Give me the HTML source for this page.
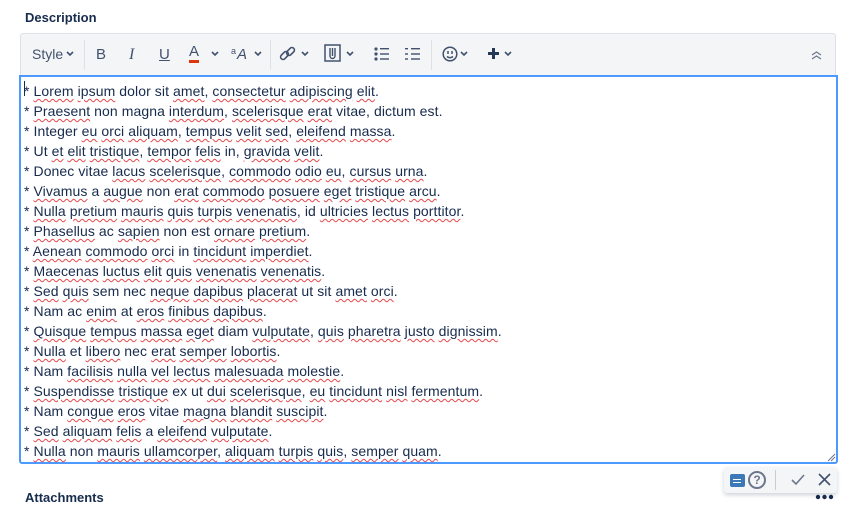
<!DOCTYPE html>
<html><head><style>
body{margin:0;width:853px;height:511px;background:#fff;font-family:"Liberation Sans",sans-serif;color:#172b4d;position:relative;overflow:hidden}
.h{position:absolute;left:25px;font-weight:bold;font-size:13px}
.tb{position:absolute;left:20px;top:33px;width:816px;height:42px;background:#f4f5f7;border:1px solid #dfe1e6;border-bottom:none;border-radius:3px 3px 0 0;box-sizing:border-box}
.tb span{position:absolute;top:12px;font-size:15px;color:#42526e}
.tb svg{position:absolute}
.sep{position:absolute;top:6px;width:1px;height:30px;background:#dfe1e6}
.ed{position:absolute;left:19px;top:75px;width:819px;height:389px;border:2px solid #4c9aff;box-sizing:border-box;border-radius:0 0 3px 3px}
.txt{position:absolute;left:24px;top:81px;font-size:14px;line-height:20px;white-space:pre;letter-spacing:0.08px}
.s{text-decoration:underline wavy #e5484d;text-decoration-thickness:1px;text-underline-offset:2px}
</style></head><body>
<div class="h" style="top:10px">Description</div>
<div class="tb">
<span style="left:11px;font-size:14px;top:12px">Style</span>
<svg style="left:45px;top:17px" width="8" height="6"><path d="M1 1L4 4L7 1" stroke="#42526e" stroke-width="1.6" fill="none"/></svg>
<div class="sep" style="left:63px"></div>
<span style="left:75px;">B</span>
<span style="left:108px;font-style:italic;font-family:'Liberation Serif';font-size:16px">I</span>
<span style="left:138px;text-decoration:underline">U</span>
<span style="left:168px;top:10px;border-bottom:3px solid #de350b;line-height:16px">A</span>
<svg style="left:190px;top:17px" width="8" height="6"><path d="M1 1L4 4L7 1" stroke="#42526e" stroke-width="1.6" fill="none"/></svg>
<span style="left:210px;font-size:9px;top:12px">a</span><span style="left:216px;font-style:italic;font-size:15px">A</span>
<svg style="left:233px;top:17px" width="8" height="6"><path d="M1 1L4 4L7 1" stroke="#42526e" stroke-width="1.6" fill="none"/></svg>
<div class="sep" style="left:249px"></div>
<svg style="left:258px;top:11px" width="18" height="18"><g fill="none" stroke="#42526e" stroke-width="1.6"><rect x="1" y="8" width="9" height="5" rx="2.5" transform="rotate(-45 5.5 10.5)"/><rect x="7" y="4" width="9" height="5" rx="2.5" transform="rotate(-45 11.5 6.5)"/></g></svg>
<svg style="left:280px;top:17px" width="8" height="6"><path d="M1 1L4 4L7 1" stroke="#42526e" stroke-width="1.6" fill="none"/></svg>
<svg style="left:303px;top:10px" width="17" height="18"><rect x="1" y="1" width="15" height="16" fill="none" stroke="#42526e" stroke-width="1.5"/><path d="M6 4V12a2.5 2.5 0 0 0 5 0V4M8.5 4v8" fill="none" stroke="#42526e" stroke-width="1.4"/></svg>
<svg style="left:325px;top:17px" width="8" height="6"><path d="M1 1L4 4L7 1" stroke="#42526e" stroke-width="1.6" fill="none"/></svg>
<svg style="left:353px;top:13px" width="15" height="14"><g fill="#42526e"><circle cx="2" cy="2" r="1.6"/><circle cx="2" cy="7" r="1.6"/><circle cx="2" cy="12" r="1.6"/><rect x="6" y="1" width="9" height="1.4"/><rect x="6" y="6.3" width="9" height="1.4"/><rect x="6" y="11.3" width="9" height="1.4"/></g></svg>
<svg style="left:384px;top:13px" width="15" height="14"><g fill="#42526e"><rect x="0" y="1" width="3" height="1.4"/><rect x="0" y="6.3" width="3" height="1.4"/><rect x="0" y="11.3" width="3" height="1.4"/><rect x="6" y="1" width="9" height="1.4"/><rect x="6" y="6.3" width="9" height="1.4"/><rect x="6" y="11.3" width="9" height="1.4"/></g></svg>
<div class="sep" style="left:410px"></div>
<svg style="left:421px;top:12px" width="16" height="16"><circle cx="8" cy="8" r="6.8" fill="none" stroke="#42526e" stroke-width="1.5"/><path d="M6 5v3M10 5v3M5 10.5q3 2.5 6 0" stroke="#42526e" stroke-width="1.5" fill="none"/></svg>
<svg style="left:439px;top:17px" width="8" height="6"><path d="M1 1L4 4L7 1" stroke="#42526e" stroke-width="1.6" fill="none"/></svg>
<svg style="left:466px;top:13px" width="13" height="13"><path d="M6.5 1v11M1 6.5h11" stroke="#253858" stroke-width="3"/></svg>
<svg style="left:483px;top:17px" width="8" height="6"><path d="M1 1L4 4L7 1" stroke="#42526e" stroke-width="1.6" fill="none"/></svg>
<svg style="left:790px;top:17px" width="11" height="9"><path d="M1 4L5.5 1L10 4M1 8L5.5 5L10 8" stroke="#6b778c" stroke-width="1.2" fill="none"/></svg>
</div>
<div class="ed"></div>
<div style="position:absolute;left:24px;top:81px;width:1px;height:15px;background:#172b4d"></div>
<div class="txt">* <span class="s">Lorem</span> <span class="s">ipsum</span> dolor sit <span class="s">amet</span>, <span class="s">consectetur</span> <span class="s">adipiscing</span> <span class="s">elit</span>.
* <span class="s">Praesent</span> non magna <span class="s">interdum</span>, <span class="s">scelerisque</span> <span class="s">erat</span> vitae, dictum est.
* Integer <span class="s">eu</span> <span class="s">orci</span> <span class="s">aliquam</span>, <span class="s">tempus</span> <span class="s">velit</span> <span class="s">sed</span>, <span class="s">eleifend</span> <span class="s">massa</span>.
* Ut <span class="s">et</span> <span class="s">elit</span> <span class="s">tristique</span>, <span class="s">tempor</span> <span class="s">felis</span> in, <span class="s">gravida</span> <span class="s">velit</span>.
* Donec vitae <span class="s">lacus</span> <span class="s">scelerisque</span>, <span class="s">commodo</span> <span class="s">odio</span> <span class="s">eu</span>, <span class="s">cursus</span> <span class="s">urna</span>.
* <span class="s">Vivamus</span> a <span class="s">augue</span> non <span class="s">erat</span> <span class="s">commodo</span> <span class="s">posuere</span> <span class="s">eget</span> <span class="s">tristique</span> <span class="s">arcu</span>.
* <span class="s">Nulla</span> <span class="s">pretium</span> <span class="s">mauris</span> <span class="s">quis</span> <span class="s">turpis</span> <span class="s">venenatis</span>, id <span class="s">ultricies</span> <span class="s">lectus</span> <span class="s">porttitor</span>.
* <span class="s">Phasellus</span> ac <span class="s">sapien</span> non est <span class="s">ornare</span> <span class="s">pretium</span>.
* <span class="s">Aenean</span> <span class="s">commodo</span> <span class="s">orci</span> in <span class="s">tincidunt</span> <span class="s">imperdiet</span>.
* <span class="s">Maecenas</span> <span class="s">luctus</span> <span class="s">elit</span> <span class="s">quis</span> <span class="s">venenatis</span> <span class="s">venenatis</span>.
* <span class="s">Sed</span> <span class="s">quis</span> sem nec <span class="s">neque</span> <span class="s">dapibus</span> <span class="s">placerat</span> ut sit <span class="s">amet</span> <span class="s">orci</span>.
* Nam ac <span class="s">enim</span> at <span class="s">eros</span> <span class="s">finibus</span> <span class="s">dapibus</span>.
* <span class="s">Quisque</span> <span class="s">tempus</span> <span class="s">massa</span> <span class="s">eget</span> diam <span class="s">vulputate</span>, <span class="s">quis</span> <span class="s">pharetra</span> <span class="s">justo</span> <span class="s">dignissim</span>.
* <span class="s">Nulla</span> et <span class="s">libero</span> nec <span class="s">erat</span> <span class="s">semper</span> <span class="s">lobortis</span>.
* Nam <span class="s">facilisis</span> <span class="s">nulla</span> <span class="s">vel</span> <span class="s">lectus</span> <span class="s">malesuada</span> <span class="s">molestie</span>.
* <span class="s">Suspendisse</span> <span class="s">tristique</span> ex ut <span class="s">dui</span> <span class="s">scelerisque</span>, <span class="s">eu</span> <span class="s">tincidunt</span> <span class="s">nisl</span> <span class="s">fermentum</span>.
* Nam <span class="s">congue</span> <span class="s">eros</span> vitae <span class="s">magna</span> <span class="s">blandit</span> <span class="s">suscipit</span>.
* <span class="s">Sed</span> <span class="s">aliquam</span> <span class="s">felis</span> a <span class="s">eleifend</span> <span class="s">vulputate</span>.
* <span class="s">Nulla</span> non <span class="s">mauris</span> <span class="s">ullamcorper</span>, <span class="s">aliquam</span> <span class="s">turpis</span> <span class="s">quis</span>, <span class="s">semper</span> <span class="s">quam</span>.</div>
<svg style="position:absolute;left:826px;top:452px" width="10" height="10"><path d="M2 9L9 2M5 9L9 5" stroke="#6b778c" stroke-width="1"/></svg>
<div style="position:absolute;left:724px;top:467px;width:113px;height:26px;background:#f4f5f7;box-shadow:0 2px 4px rgba(9,30,66,.2);border-radius:3px"></div>
<div style="position:absolute;left:730px;top:474px;width:15px;height:13px;background:#3c78b8;border-radius:2px"><div style="margin:5px 3px 0;height:1px;background:#fff;width:8px"></div><div style="margin:2px 3px 0;height:1px;background:#fff;width:8px"></div></div>
<div style="position:absolute;left:748px;top:471px;width:14px;height:14px;border:2px solid #6b778c;border-radius:50%;font-size:12px;font-weight:bold;text-align:center;line-height:14px;color:#6b778c">?</div>
<div style="position:absolute;left:775px;top:470px;width:1px;height:20px;background:#ccc"></div>
<svg style="position:absolute;left:791px;top:474px" width="14" height="12"><path d="M1 6L5 10L13 1" stroke="#6b778c" stroke-width="1.6" fill="none"/></svg>
<svg style="position:absolute;left:818px;top:473px" width="13" height="13"><path d="M1 1L12 12M12 1L1 12" stroke="#42526e" stroke-width="1.6"/></svg>
<svg style="position:absolute;left:815px;top:494px" width="20" height="6"><g fill="#172b4d"><circle cx="3" cy="3" r="2.2"/><circle cx="9.5" cy="3" r="2.2"/><circle cx="16" cy="3" r="2.2"/></g></svg>
<div class="h" style="top:490px">Attachments</div>
</body></html>
